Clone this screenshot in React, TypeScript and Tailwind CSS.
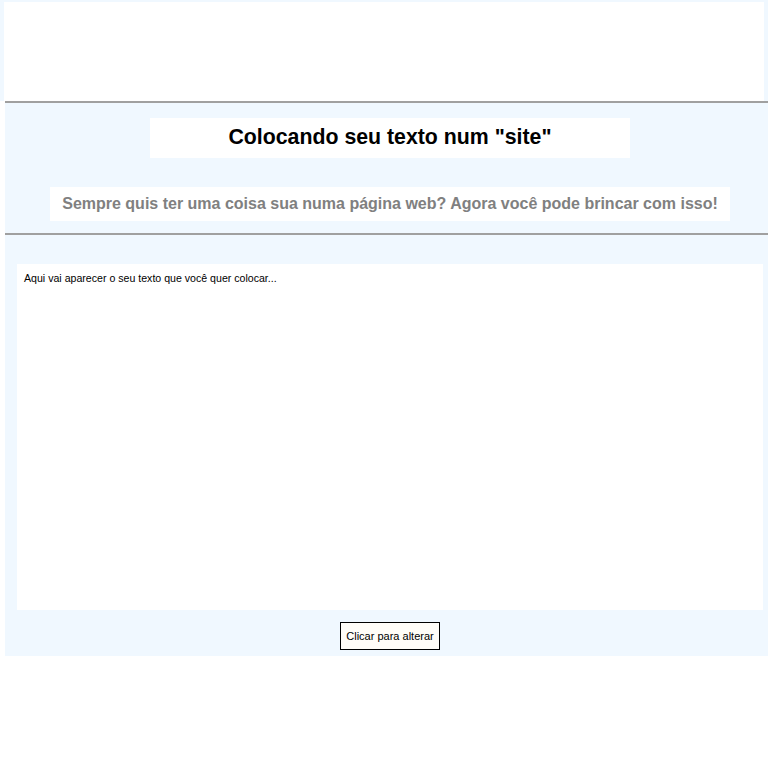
import React from "react";

const App = () => {
  return (
    <div className="min-h-[768px] bg-white font-['Liberation_Sans',Arial,sans-serif]">
      <header className="h-[101px] bg-white border-t-2 border-x-4 border-[#f0f8ff]" />

      <main className="ml-[5px] bg-[#f0f8ff] pb-[6px]">
        <hr className="border-0 h-[2px] bg-[#a0a0a0]" />

        <div className="pl-[12px] pr-[5px]">
          <div className="w-[480px] h-[40px] mx-auto mt-[15px] bg-white flex items-center justify-center">
            <h1 className="text-[21.3px] font-bold text-black">Colocando seu texto num "site"</h1>
          </div>

          <div className="w-[680px] h-[34px] mx-auto mt-[29px] bg-white flex items-center justify-center">
            <h2 className="text-[16px] font-bold text-[#808080]">
              Sempre quis ter uma coisa sua numa página web? Agora você pode brincar com isso!
            </h2>
          </div>
        </div>

        <hr className="border-0 h-[2px] bg-[#a0a0a0] mt-[12px]" />

        <div className="pl-[12px] pr-[5px]">
          <div className="mt-[29px] h-[346px] bg-white px-[7px] py-[7px]">
            <p className="text-[10.6px] text-black">Aqui vai aparecer o seu texto que você quer colocar...</p>
          </div>

          <div className="flex justify-center mt-[12px]">
            <button className="w-[100px] h-[28px] border border-black bg-[#fffdf8] text-[11px] text-black">
              Clicar para alterar
            </button>
          </div>
        </div>
      </main>
    </div>
  );
};

export default App;
